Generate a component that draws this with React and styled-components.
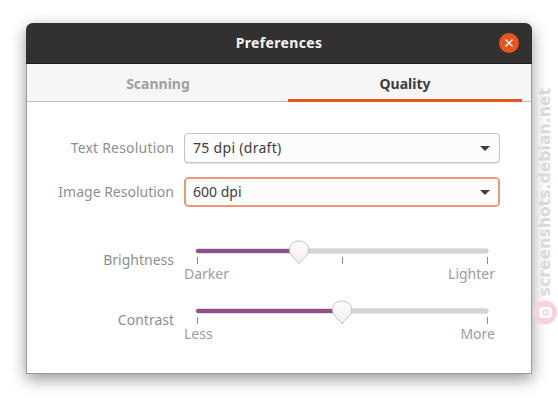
import React from 'react';
import styled, { createGlobalStyle } from 'styled-components';

const GlobalStyle = createGlobalStyle`
  html, body {
    margin: 0;
    padding: 0;
    background: #fff;
  }
  body {
    width: 558px;
    height: 403px;
    overflow: hidden;
    font-family: "Noto Sans", "Open Sans", sans-serif;
  }
`;

const Page = styled.div`
  position: relative;
  width: 558px;
  height: 403px;
  padding: 23px 26px 0;
  box-sizing: border-box;
`;

const Win = styled.div`
  width: 506px;
  height: 351px;
  box-sizing: border-box;
  border: 1px solid #9a9a9a;
  border-top: 0;
  border-radius: 7px 7px 0 0;
  background: #fff;
  box-shadow: 0 5px 16px rgba(0, 0, 0, 0.42);
`;

const TitleBar = styled.header`
  height: 41px;
  margin: 0 -1px;
  padding: 0 12px 0 0;
  display: flex;
  align-items: center;
  justify-content: center;
  position: relative;
  background: #323030;
  border-radius: 7px 7px 0 0;
  border-bottom: 1px solid #1f1e1e;
  box-sizing: border-box;
`;

const Title = styled.h1`
  margin: 0 0 1px;
  color: #f5f5f5;
  font-size: 14px;
  font-weight: 700;
  letter-spacing: 0.35px;
  padding-left: 12px;
`;

const CloseBtn = styled.button`
  position: absolute;
  right: 13px;
  top: 10px;
  width: 20px;
  height: 20px;
  padding: 0;
  border: 0;
  border-radius: 50%;
  background: #ea5420;
  display: flex;
  align-items: center;
  justify-content: center;
`;

const Tabs = styled.nav`
  height: 38px;
  padding: 0 9px 0 1px;
  display: flex;
  background: #f6f6f6;
  box-shadow: inset 0 -1px 0 #bdbdbd;
`;

const Tab = styled.div`
  width: ${p => p.$width}px;
  display: flex;
  align-items: center;
  justify-content: center;
  padding-top: 3px;
  font-size: 14px;
  font-weight: 700;
  color: ${p => (p.$active ? '#3d3d3d' : '#a0a0a0')};
  border-bottom: 3px solid ${p => (p.$active ? '#e95420' : 'transparent')};
  box-sizing: border-box;
`;

const Body = styled.div`
  padding: 31px 32px 0 0;
`;

const FormGrid = styled.div`
  display: grid;
  grid-template-columns: 147px 316px;
  column-gap: 10px;
  align-items: center;
`;

const RowLabel = styled.div`
  text-align: right;
  font-size: 14px;
  padding-bottom: 2px;
  letter-spacing: ${p => p.$spacing || 0}px;
  color: #8f8f8f;
`;

const Combo = styled.div`
  height: 30px;
  box-sizing: border-box;
  padding: 0 9px 0 8px;
  display: flex;
  align-items: center;
  justify-content: space-between;
  font-size: 14px;
  letter-spacing: ${p => p.$spacing || 0}px;
  color: #3d3d3d;
  background: #fcfcfc;
  border-radius: 4px;
  border: 1px solid ${p => (p.$focused ? '#ee9679' : '#c4c4c4')};
  box-shadow: ${p => (p.$focused ? 'inset 0 0 0 1px #ee9679' : '0 1px 0 #e4e4e4')};
`;

const ComboText = styled.span`
  margin-bottom: 2px;
`;

const Caret = styled.span`
  width: 0;
  height: 0;
  border-left: 5px solid transparent;
  border-right: 5px solid transparent;
  border-top: 5px solid #3d3d3d;
`;

const Spacer = styled.div`
  grid-column: 1 / -1;
  height: ${p => p.$h}px;
`;

const SliderLabel = styled(RowLabel)`
  align-self: start;
  padding: 1px 0 0;
`;

const SliderBox = styled.div`
  height: 52px;
  box-sizing: border-box;
  padding: 0 12px;
`;

const Track = styled.div`
  position: relative;
  height: 4px;
  border-radius: 2px;
  background: #d4d4d4;
  box-shadow: 0 0 0 0.5px #c4c4c4;
`;

const Fill = styled.div`
  height: 100%;
  border-radius: 2px 0 0 2px;
  background: #924d8b;
`;

const Thumb = styled.svg`
  position: absolute;
  top: -9px;
  margin-left: -11px;
`;

const Ticks = styled.div`
  display: flex;
  justify-content: space-between;
  margin: 4px 0 0;
  padding: 0 0 0 1px;
`;

const Tick = styled.i`
  display: block;
  width: 1px;
  height: 7px;
  background: #8c8c8c;
`;

const Marks = styled.div`
  display: flex;
  justify-content: space-between;
  margin: 2px -7px 0 -12px;
  font-size: 14px;
  line-height: 16px;
  color: #9c9c9c;
`;

const Watermark = styled.div`
  position: absolute;
  left: 533px;
  top: 88px;
  width: 24px;
  display: flex;
  flex-direction: column;
  align-items: center;
  gap: 4px;
`;

const MarkText = styled.span`
  writing-mode: vertical-rl;
  transform: rotate(180deg);
  font-family: "DejaVu Sans", sans-serif;
  font-size: 15.7px;
  font-weight: 700;
  line-height: 24px;
  color: #d9d9d9;
  white-space: nowrap;
`;

const Slider = ({ value, left, right }) => (
  <SliderBox>
    <Track>
      <Fill style={{ width: `${value}%` }} />
      <Thumb style={{ left: `${value}%` }} width="22" height="26" viewBox="0 0 22 26">
        <defs>
          <linearGradient id="thumbFill" x1="0" y1="0" x2="0" y2="1">
            <stop offset="0" stopColor="#fdfdfc" />
            <stop offset="1" stopColor="#f1f0ee" />
          </linearGradient>
        </defs>
        <path
          d="M11 1 C16.5 1 20.5 4.5 20.5 9.5 C20.5 12.5 19.5 14.5 17.5 16.5 L11 23.5 L4.5 16.5 C2.5 14.5 1.5 12.5 1.5 9.5 C1.5 4.5 5.5 1 11 1 Z"
          fill="url(#thumbFill)"
          stroke="#c6c2bc"
        />
      </Thumb>
    </Track>
    <Ticks>
      <Tick />
      <Tick />
      <Tick />
    </Ticks>
    <Marks>
      <span>{left}</span>
      <span>{right}</span>
    </Marks>
  </SliderBox>
);

const App = () => (
  <>
    <GlobalStyle />
    <Page>
      <Win>
        <TitleBar>
          <Title>Preferences</Title>
          <CloseBtn aria-label="Close">
            <svg width="10" height="10" viewBox="0 0 10 10">
              <path d="M1.5 1.5 L8.5 8.5 M8.5 1.5 L1.5 8.5" stroke="#fff" strokeWidth="1.3" />
            </svg>
          </CloseBtn>
        </TitleBar>
        <Tabs>
          <Tab $width={260}>Scanning</Tab>
          <Tab $width={234} $active>Quality</Tab>
        </Tabs>
        <Body>
          <FormGrid>
            <RowLabel $spacing={0.2}>Text Resolution</RowLabel>
            <Combo $spacing={0.3}>
              <ComboText>75 dpi (draft)</ComboText>
              <Caret />
            </Combo>
            <Spacer $h={14} />
            <RowLabel>Image Resolution</RowLabel>
            <Combo $focused>
              <ComboText>600 dpi</ComboText>
              <Caret />
            </Combo>
            <Spacer $h={42} />
            <SliderLabel>Brightness</SliderLabel>
            <Slider value={35.4} left="Darker" right="Lighter" />
            <Spacer $h={8} />
            <SliderLabel>Contrast</SliderLabel>
            <Slider value={50} left="Less" right="More" />
          </FormGrid>
        </Body>
      </Win>
      <Watermark>
        <MarkText>screenshots.debian.net</MarkText>
        <svg width="24" height="25" viewBox="0 0 24 25">
          <circle cx="12" cy="12.5" r="12" fill="#f6d3dc" />
          <rect x="6" y="7" width="13" height="11" rx="3.5" fill="#fff" />
          <circle cx="12.5" cy="12.5" r="2.5" fill="none" stroke="#f6d3dc" strokeWidth="1.5" />
        </svg>
      </Watermark>
    </Page>
  </>
);

export default App;
